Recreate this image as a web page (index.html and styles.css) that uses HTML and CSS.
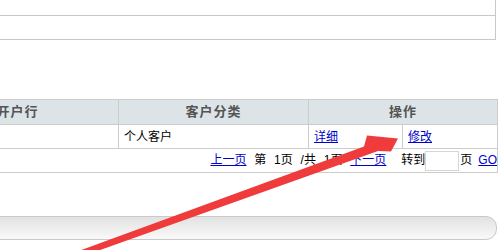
FILE: index.html
```html
<!DOCTYPE html>
<html lang="zh-CN">
<head>
<meta charset="utf-8">
<title>客户列表</title>
<link rel="stylesheet" href="styles.css">
</head>
<body>
<div class="page">
  <div class="topbox">
    <div class="trow r1"></div>
    <div class="trow r2"></div>
  </div>
  <table class="grid">
    <colgroup><col class="c1"><col class="c2"><col class="c3"><col class="c4"></colgroup>
    <thead>
      <tr><th>开户行</th><th>客户分类</th><th colspan="2">操作</th></tr>
    </thead>
    <tbody>
      <tr class="data"><td></td><td>个人客户</td><td><a href="#">详细</a></td><td><a href="#">修改</a></td></tr>
      <tr class="pager"><td colspan="4"><a href="#">上一页</a> 第 1页 /共 1页 <a href="#">下一页</a><span class="goto">转到</span><input class="pageinput" type="text"><span class="pg">页</span><a class="go" href="#">GO</a></td></tr>
    </tbody>
  </table>
  <div class="bar"></div>
</div>
<svg class="arrow" width="500" height="250" viewBox="0 0 500 250">
  <polygon points="60,257.8 364,146.6 367,135.5 398,138.5 391,151.5 378,151.1 60,264.3" fill="#ef3b3b"/>
</svg>
</body>
</html>
```
FILE: styles.css
```css
body {
  margin: 0;
  width: 500px;
  height: 250px;
  overflow: hidden;
  position: relative;
  background: #fff;
  font-family: "Liberation Sans", "Noto Sans CJK SC", sans-serif;
  font-size: 12px;
  color: #000;
}

.topbox {
  margin-left: -10px;
  margin-right: 4px;
  border-right: 1px solid #c8c8c8;
}

.trow {
  border-bottom: 1px solid #c8c8c8;
}

.r1 { height: 15px; }
.r2 { height: 23px; }

.grid {
  margin-top: 59px;
  margin-left: -84px;
  width: 581px;
  border-collapse: collapse;
  table-layout: fixed;
}

.c1 { width: 202px; }
.c2 { width: 190px; }
.c3 { width: 94px; }
.c4 { width: 95px; }

.grid th {
  height: 24px;
  padding: 0;
  background: #dde4e8;
  color: #555;
  font-weight: bold;
  font-size: 13px;
  letter-spacing: 1px;
  line-height: 16px;
  text-align: center;
  border: 1px solid #ccc;
}

.grid td {
  height: 23px;
  padding: 0 0 0 5px;
  line-height: 16px;
  text-align: left;
  border: 1px solid #ccc;
  white-space: nowrap;
}

.grid a {
  color: #0000cc;
  text-decoration: underline;
}

.pager td {
  text-align: right;
  padding-right: 0;
  word-spacing: 4.5px;
}

.goto {
  margin-left: 15px;
}

.pageinput {
  width: 34px;
  height: 20px;
  box-sizing: border-box;
  margin: 0;
  padding: 0;
  border: 1px solid #d6d6d6;
  vertical-align: middle;
  background: #fff;
}

.pg {
  margin-left: 1px;
}

.grid .go {
  margin-left: 6px;
}

.bar {
  margin-top: 43px;
  margin-left: -20px;
  margin-right: 3px;
  height: 22px;
  border: 1px solid #c9c9c9;
  border-radius: 0 11px 11px 0;
  background: linear-gradient(#e2e2e2, #f9f9f9);
}

.arrow {
  position: absolute;
  left: 0;
  top: 0;
  pointer-events: none;
}
```
